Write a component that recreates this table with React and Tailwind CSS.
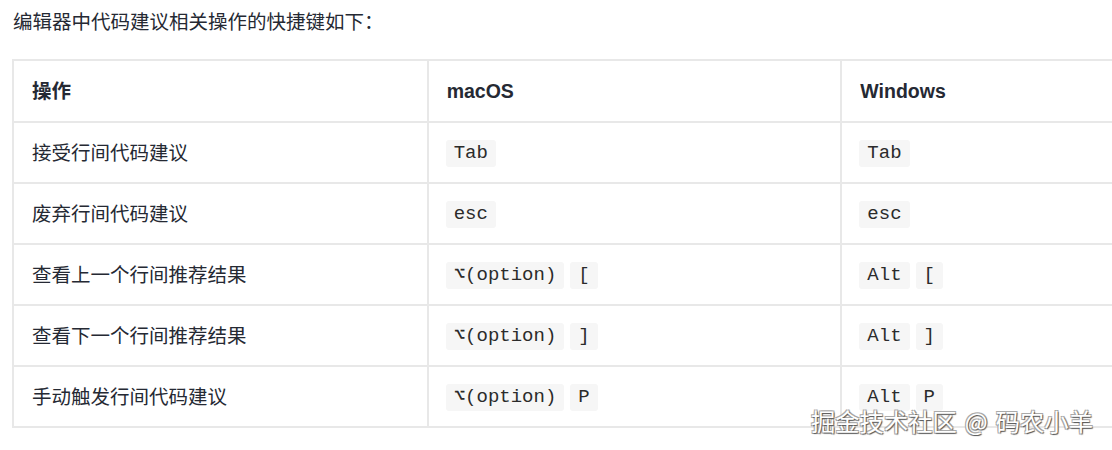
import React from "react";

const rows = [
  { op: "接受行间代码建议", mac: ["Tab"], win: ["Tab"] },
  { op: "废弃行间代码建议", mac: ["esc"], win: ["esc"] },
  { op: "查看上一个行间推荐结果", mac: ["⌥(option)", "["], win: ["Alt", "["] },
  { op: "查看下一个行间推荐结果", mac: ["⌥(option)", "]"], win: ["Alt", "]"] },
  { op: "手动触发行间代码建议", mac: ["⌥(option)", "P"], win: ["Alt", "P"] },
];

function Keys({ keys }) {
  return (
    <div className="flex items-center gap-[6px]">
      {keys.map((k, i) => (
        <span
          key={i}
          className="h-[27px] flex items-center px-[8px] rounded-[3px] bg-[#f6f6f6] text-[19px] text-[#2b2b2b] font-['Liberation_Mono','DejaVu_Sans_Mono',monospace] whitespace-pre"
        >
          {k}
        </span>
      ))}
    </div>
  );
}

export default function App() {
  return (
    <div className="relative w-[1112px] h-[450px] overflow-hidden bg-white text-[#252933] font-['Liberation_Sans','Noto_Sans_CJK_SC',sans-serif]">
      <div className="pl-[12px] pt-[8px]">
        <p className="text-[19.5px] leading-[28px] pl-[1px]">编辑器中代码建议相关操作的快捷键如下：</p>
        <div className="mt-[23px] w-[1244px] border-t-2 border-l-2 border-[#e8e8e8]">
          <div className="flex h-[62px] border-b-2 border-[#e8e8e8] font-bold text-[19.5px]">
            <div className="w-[415px] flex items-center pl-[18px] pt-[2px] border-r-2 border-[#e8e8e8]">操作</div>
            <div className="w-[414px] flex items-center pl-[18px] pt-[2px] border-r-2 border-[#e8e8e8]">macOS</div>
            <div className="w-[414px] flex items-center pl-[18px] pt-[2px] border-r-2 border-[#e8e8e8]">Windows</div>
          </div>
          {rows.map((r, i) => (
            <div key={i} className="flex h-[61px] border-b-2 border-[#e8e8e8] text-[19.5px]">
              <div className="w-[415px] flex items-center pl-[18px] pt-[2px] border-r-2 border-[#e8e8e8]">{r.op}</div>
              <div className="w-[414px] flex items-center pl-[17px] pt-[2px] border-r-2 border-[#e8e8e8]">
                <Keys keys={r.mac} />
              </div>
              <div className="w-[414px] flex items-center pl-[17px] pt-[2px] border-r-2 border-[#e8e8e8]">
                <Keys keys={r.win} />
              </div>
            </div>
          ))}
        </div>
      </div>
      <div className="absolute left-[811px] top-[405px] flex items-center text-[24.3px] leading-[32px] text-white font-['Noto_Sans_CJK_SC',sans-serif] [text-shadow:1px_1px_1px_#555,-1px_-1px_0_#aaa,1px_-1px_0_#aaa,-1px_1px_0_#aaa] whitespace-pre">
        <span>掘金技术社区</span>
        <span className="mx-[8px]">@</span>
        <span>码农小羊</span>
      </div>
    </div>
  );
}
